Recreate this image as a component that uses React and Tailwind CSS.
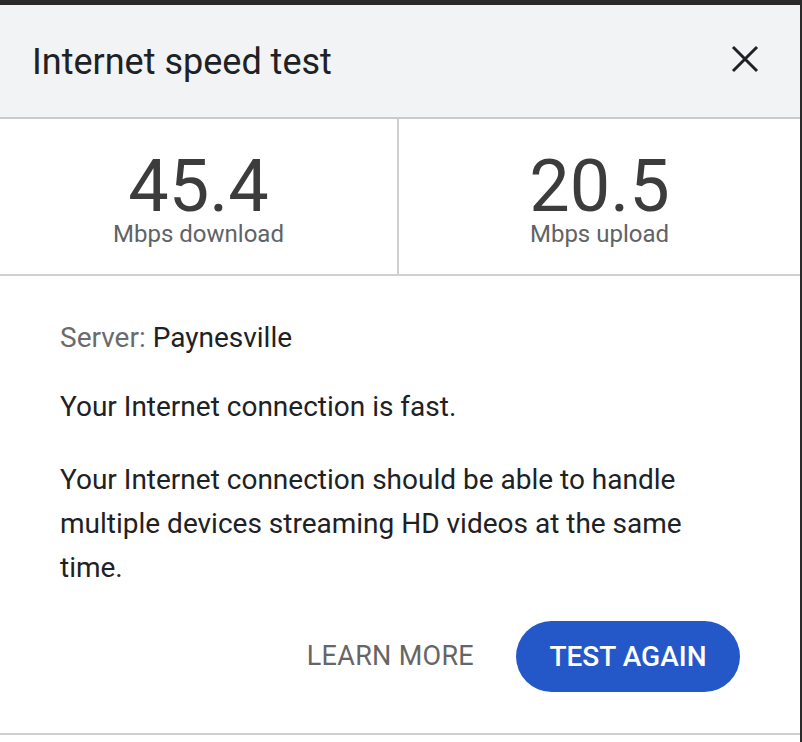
import React from "react";

export default function App() {
  return (
    <div className="w-[802px] h-[742px] bg-[#2a2a2a] pt-[5px] pr-[2px] overflow-hidden" style={{ fontFamily: "Roboto, 'Liberation Sans', sans-serif" }}>
      <div className="h-full bg-white flex flex-col">
        <div className="h-[114px] bg-[#f1f3f4] border-b-2 border-[#cacaca] flex items-center justify-between pl-[32px] pr-[40px] shrink-0">
          <div className="text-[36px] text-[#202124] leading-none mt-[2px]">Internet speed test</div>
          <svg width="30" height="30" viewBox="0 0 30 30" className="mt-[-4px]">
            <path d="M3 3 L27 27 M27 3 L3 27" stroke="#202124" strokeWidth="3" strokeLinecap="butt" />
          </svg>
        </div>
        <div className="h-[157px] border-b-2 border-[#d0d0d0] flex shrink-0">
          <div className="w-[399px] border-r-2 border-[#d0d0d0] flex flex-col items-center pt-[36px]">
            <div className="text-[72px] leading-[64px] text-[#3c3c3c]">45.4</div>
            <div className="text-[24px] leading-[28px] text-[#5f6368] mt-[1px]">Mbps download</div>
          </div>
          <div className="flex-1 flex flex-col items-center pt-[36px]">
            <div className="text-[72px] leading-[64px] text-[#3c3c3c]">20.5</div>
            <div className="text-[24px] leading-[28px] text-[#5f6368] mt-[1px]">Mbps upload</div>
          </div>
        </div>
        <div className="flex-1 flex flex-col pl-[60px] pr-[100px] pt-[46px]">
          <div className="text-[28px] leading-[32px]">
            <span className="text-[#6b6b6b]">Server: </span>
            <span className="text-[#202124]">Paynesville</span>
          </div>
          <div className="text-[28px] leading-[32px] text-[#202124] mt-[37px]">Your Internet connection is fast.</div>
          <div className="text-[28px] leading-[44px] text-[#202124] mt-[35px]">
            Your Internet connection should be able to handle multiple devices streaming HD videos at the same time.
          </div>
          <div className="flex items-center justify-end gap-[42px] mt-[31px] -mr-[40px]">
            <div className="text-[27px] text-[#666] tracking-[0.3px]">LEARN MORE</div>
            <div className="w-[224px] h-[71px] rounded-full bg-[#2458c8] text-white text-[28px] font-medium flex items-center justify-center">TEST AGAIN</div>
          </div>
        </div>
        <div className="h-[9px] border-t-2 border-[#d0d0d0] shrink-0" />
      </div>
    </div>
  );
}
